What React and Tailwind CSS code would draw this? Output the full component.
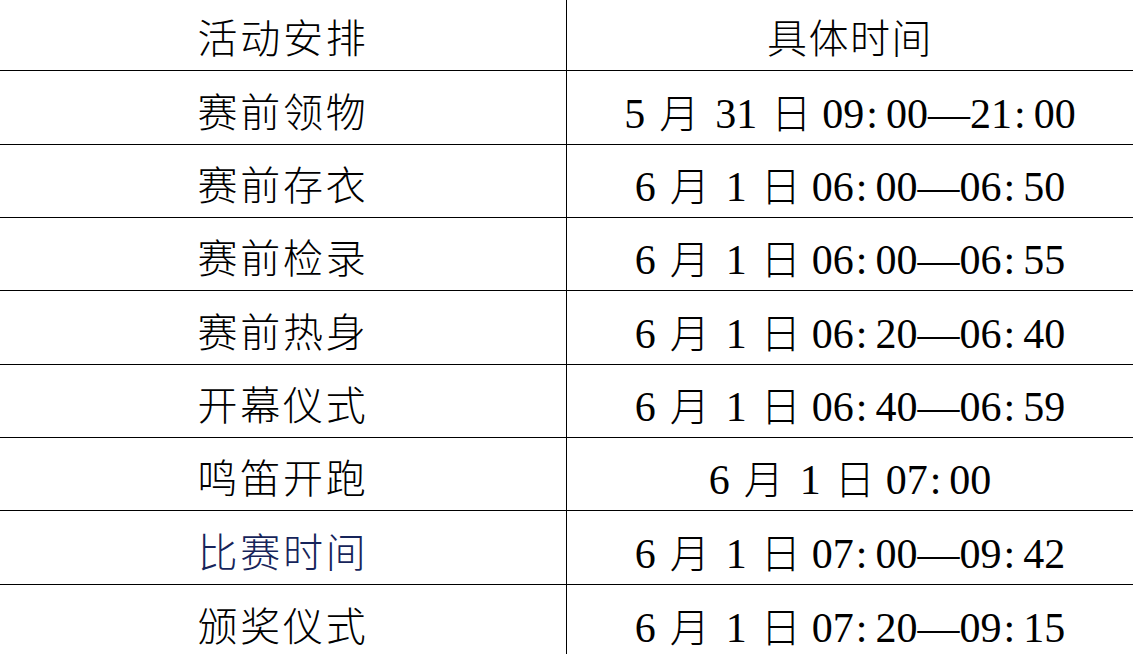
import React from "react";

const rows = [
  { name: "赛前领物", m: "5", d: "31", a: "09", b: "00", c: "21", e: "00", h: "h-[74px]" },
  { name: "赛前存衣", m: "6", d: "1", a: "06", b: "00", c: "06", e: "50", h: "h-[73px]" },
  { name: "赛前检录", m: "6", d: "1", a: "06", b: "00", c: "06", e: "55", h: "h-[73px]" },
  { name: "赛前热身", m: "6", d: "1", a: "06", b: "20", c: "06", e: "40", h: "h-[74px]" },
  { name: "开幕仪式", m: "6", d: "1", a: "06", b: "40", c: "06", e: "59", h: "h-[73px]" },
  { name: "鸣笛开跑", m: "6", d: "1", a: "07", b: "00", c: null, e: null, h: "h-[73px]" },
  { name: "比赛时间", m: "6", d: "1", a: "07", b: "00", c: "09", e: "42", h: "h-[74px]", blue: true },
  { name: "颁奖仪式", m: "6", d: "1", a: "07", b: "20", c: "09", e: "15", h: "h-[80px]", last: true },
];

const font = { fontFamily: '"Liberation Serif", "Noto Sans CJK SC", serif' };

function Time({ a, b }) {
  return (
    <span>
      {a}
      <span className="ml-[2px] mr-[8px]">:</span>
      {b}
    </span>
  );
}

export default function App() {
  return (
    <div className="w-[1133px] h-[654px] overflow-hidden bg-white text-black" style={font}>
      <div className="flex h-[71px] border-b border-black">
        <div className="w-[567px] border-r border-black flex items-center justify-center pt-[10px] text-[40px] leading-none font-light tracking-[2.7px]">
          活动安排
        </div>
        <div className="flex-1 flex items-center justify-center pt-[10px] text-[40px] leading-none font-light tracking-[1.5px]">
          具体时间
        </div>
      </div>
      {rows.map((r, i) => (
        <div key={i} className={`flex ${r.h} ${r.last ? "" : "border-b border-black"}`}>
          <div
            className={`w-[567px] border-r border-black flex items-center justify-center pt-[12px] text-[40px] leading-none font-light tracking-[2.7px] ${
              r.blue ? "text-[#16245a]" : ""
            } ${r.last ? "pb-[7px]" : ""}`}
          >
            {r.name}
          </div>
          <div
            className={`flex-1 flex items-center justify-center pt-[12px] text-[42px] leading-none whitespace-pre ${
              r.last ? "pb-[7px]" : ""
            }`}
          >
            <span className="flex items-baseline">
              <span>{r.m}</span>
              <span className="ml-[14px] mr-[16px] text-[40px] font-light">月</span>
              <span>{r.d}</span>
              <span className="ml-[14px] mr-[11px] text-[40px] font-light">日</span>
              <Time a={r.a} b={r.b} />
              {r.c && (
                <>
                  <span>—</span>
                  <Time a={r.c} b={r.e} />
                </>
              )}
            </span>
          </div>
        </div>
      ))}
    </div>
  );
}
